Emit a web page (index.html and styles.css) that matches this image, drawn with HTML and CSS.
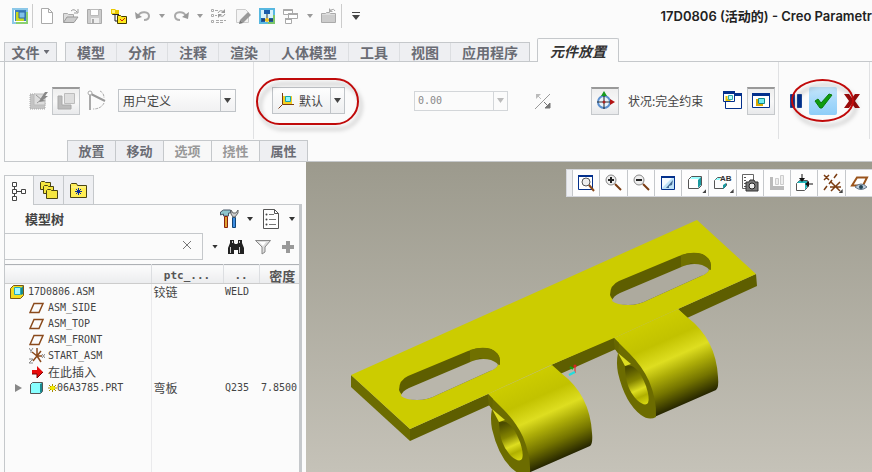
FILE: index.html
```html
<!DOCTYPE html>
<html lang="zh-CN">
<head>
<meta charset="utf-8">
<title>17D0806</title>
<link rel="stylesheet" href="styles.css">
</head>
<body>
<header class="titlebar">
  <div class="quick">
    <button class="ic" aria-label="窗口"><svg width="16" height="16"><path d="M1 1h14v14H1z" fill="#fff" stroke="#8cc8e8" stroke-width="2"/><path d="M15 4v11H4" fill="none" stroke="#8bd070" stroke-width="2"/><path d="M3 2h11v11H3z" fill="#3c7ebc"/><path d="M4 4v9h8v-3H7V4z" fill="#c8d820"/><path d="M7 4h6v6H7z" fill="#7fc0e8" stroke="#2c68a4"/></svg></button>
    <span class="sep"></span>
    <button class="ic" aria-label="新建"><svg width="16" height="16"><path d="M2.500 .5h7l4 4v11h-11zM9.500 .5v4h4" fill="#fff" stroke="#aaa"/></svg></button>
    <button class="ic" aria-label="打开"><svg width="16" height="16"><path d="M.5 14V5.500h4l1 1h5V9" fill="#ddd" stroke="#aaa"/><path d="M.5 14.500L4 9h11l-4 5.500z" fill="#ccc" stroke="#999"/><path d="M8 3q3-3 6 1M15 1v4h-4" fill="none" stroke="#999"/></svg></button>
    <button class="ic" aria-label="保存"><svg width="16" height="16"><path d="M.5 1.500h14v14H.5z" fill="#ccc" stroke="#aaa"/><path d="M3.500 1.500h8v6h-8z" fill="#fff" stroke="#bbb"/><path d="M4 10h8v5H4z" fill="#eee"/><path d="M5 11h2v4H5z" fill="#aaa"/></svg></button>
    <button class="ic" aria-label="重新生成"><svg width="16" height="16"><path d="M1.500 1v5.500H8M4 7v6h4" fill="none" stroke="#222"/><path d="M0 1h4l1 1h3v4H0z" fill="#e9c800"/><path d="M1 2h3v3H1z" fill="#fff37a"/><path d="M6.500 9V7.500h3l1 1h5v7h-9z" fill="#ffe91c" stroke="#443c00"/><path d="M9 11l2 2 3-3" fill="none" stroke="#c21"/></svg></button>
    <button class="ic" aria-label="撤消"><svg width="16" height="16"><path d="M3 8c3-6 11-4 11 0 0 3-2 4-5 4" fill="none" stroke="#aaa" stroke-width="2"/><path d="M0 4l1 7 6-2z" fill="#999"/></svg></button>
    <button class="drop" aria-label="撤消列表"></button>
    <button class="ic" aria-label="重做"><svg width="16" height="16"><path d="M13 8C10 2 2 4 2 8c0 3 2 4 5 4" fill="none" stroke="#aaa" stroke-width="2"/><path d="M16 4l-1 7-6-2z" fill="#999"/></svg></button>
    <button class="drop" aria-label="重做列表"></button>
    <button class="ic" aria-label="再生"><svg width="16" height="16"><path d="M.5 1.500h2v2h-2zM.5 6.500h2v2h-2zM.5 12.500h2v2h-2z" fill="#fff" stroke="#aaa"/><path d="M4 2.500h3M4 7.500h2M5 12.500h3m1 0h3m1 0h2M5 14.500h3m1 0h3" stroke="#aaa"/><path d="M7 5q2-4 6-1M14 6q-2 4-6 1" fill="none" stroke="#999"/><path d="M14 1v4h-4zM7 10V6h4z" fill="#999"/></svg></button>
    <button class="ic" aria-label="编辑"><svg width="16" height="16"><path d="M1.500 1.500h9l3 3v10h-12z" fill="#f4f4f4" stroke="#ccc"/><path d="M5 12l8-8 3 3-8 8z" fill="#999"/><path d="M4 16l1-4 3 3z" fill="#777"/></svg></button>
    <button class="ic" aria-label="模型表示"><svg width="16" height="16"><path d="M1 1h14v14H1z" fill="#d8f2fa" stroke="#58b8e0" stroke-width="2"/><path d="M5 2h6v4H5zM2 10h4v4H2zM10 10h4v4h-4z" fill="#1c5eaa"/><path d="M8 6v5M3 12h11" stroke="#333"/><circle cx="8" cy="12" r="2" fill="#f7c21a"/><path d="M15 7v8H9" fill="none" stroke="#7cc66a" stroke-width="2"/></svg></button>
    <button class="ic" aria-label="窗口列表"><svg width="16" height="16"><path d="M.5 1.500h9v5h-9zM5.500 5.500h9v5h-9zM2.500 10.500h6v5h-6z" fill="#fff" stroke="#aaa"/><path d="M.5 2h9M5 6h10M2 11h7" stroke="#aaa" stroke-width="2"/></svg></button>
    <button class="drop" aria-label="窗口选择"></button>
    <button class="ic" aria-label="关闭"><svg width="16" height="16"><path d="M.5 14.500v-9h4l1-1h3l1 1h5v9z" fill="#ddd" stroke="#aaa"/><path d="M1 7h13v7H1z" fill="#ccc"/><path d="M10 2q3-2 4 1" fill="none" stroke="#aaa"/><path d="M8 0v4h4z" fill="#aaa"/></svg></button>
    <span class="sep"></span>
    <button class="ic" aria-label="自定义"><svg width="16" height="16"><path d="M4 4h8v1H4zM4 7h8l-4 5z" fill="#444"/></svg></button>
  </div>
  <h1 class="title">17D0806 (活动的) - Creo Parametr</h1>
</header>

<nav class="tabs">
  <button class="file">文件<i class="tri"></i></button>
  <div class="tabset">
    <button>模型</button><button>分析</button><button>注释</button><button>渲染</button><button>人体模型</button><button>工具</button><button>视图</button><button>应用程序</button>
  </div>
  <button class="active">元件放置</button>
</nav>

<section class="ribbon">
  <div class="controls">
    <div class="group constraints">
      <button class="ic tool" aria-label="界面"><svg width="22" height="22"><path d="M1 4h6v9h9v6H1z" fill="#c4c4c4" stroke="#aaa" stroke-dasharray="1 1"/><path d="M5 4h11v11H5z" fill="#ddd" stroke="#bbb"/><path d="M7 5l6 5M8 13l5-4" stroke="#999"/><path d="M10 12l2-4 4-6h3l-3 4h3l-5 4 3 1z" fill="#888"/></svg></button>
      <button class="pressed" aria-label="手动"><svg width="20" height="20"><path d="M2 5h4v9h9v4H2z" fill="#bbb" stroke="#aaa"/><path d="M8.500 2.500h10v10h-10z" fill="#dedede" stroke="#bcbcbc"/></svg></button>
      <button class="ic tool" aria-label="约束"><svg width="22" height="22"><path d="M5 4v16" stroke="#aaa" stroke-width="2"/><path d="M6 4l14 7" stroke="#999" stroke-width="2"/><circle cx="5" cy="3" r="2" fill="#fff" stroke="#aaa"/><path d="M15 1q4 2 4 7M19 13q-3 6-11 6" fill="none" stroke="#aaa" stroke-dasharray="3 1"/></svg></button>
      <span class="combo"><select aria-label="约束集"><option>用户定义</option></select></span>
    </div>
    <div class="group placement">
      <span class="circled">
        <button class="split"><svg width="18" height="18"><path d="M5.500 1v11.500H17M5.500 12.500l-4 4" fill="none" stroke="#7a3c12"/><path d="M6 4h9v8H6z" fill="#f5d020"/><path d="M8.500 4.500h5v5h-5z" fill="#8ff6fa" stroke="#16a4ac"/></svg>默认<span class="end"><i class="tri"></i></span></button>
        <span class="ring"></span>
      </span>
      <span class="offset"><input aria-label="偏移" value="0.00" disabled><button disabled aria-label="偏移列表"><i class="tri"></i></button></span>
      <button class="ic flip" aria-label="反向" disabled><svg width="18" height="18"><path d="M1 17L16 2" stroke="#999"/><path d="M3 3l4 4" stroke="#bbb"/><path d="M2 2h5L2 7z" fill="#bbb"/><path d="M16 16h-5l5-5zM10 10l4 4" fill="#777" stroke="#777"/></svg></button>
      <div class="status">
        <button class="pressed" aria-label="3D 拖动器"><svg width="22" height="22"><circle cx="10" cy="12" r="6" fill="#e9f3fc" stroke="#5b8fce" stroke-width="2"/><path d="M10 5v14" stroke="#222"/><path d="M3 12h13" stroke="#333"/><path d="M7 6l3-5 3 5z" fill="#179a20"/><path d="M16 9l5 3-5 3z" fill="#b31212"/><circle cx="10" cy="12" r="1.500" fill="#a22"/></svg></button>
        <output>状况:完全约束</output>
        <button class="ic win" aria-label="单独窗口"><svg width="22" height="20"><path d="M3.500 5v12.500h16V3" fill="#fff" stroke="#03308c"/><path d="M9 2h11v3H9z" fill="#03308c"/><path d="M1.500 1.500h11v9h-11z" fill="#fff" stroke="#03308c"/><path d="M1 0h12v3H1z" fill="#03308c"/><path d="M4.500 5v4h4" fill="none" stroke="#e2c000" stroke-width="2"/><path d="M6.500 4.500h4v4h-4z" fill="#bff" stroke="#3aa"/></svg></button>
        <button class="pressed" aria-label="主窗口"><svg width="20" height="20"><path d="M1.500 3.500h17v13h-17z" fill="#fff" stroke="#03308c"/><path d="M1 2h18v3H1z" fill="#03308c"/><path d="M6 8v6h6" fill="none" stroke="#d8a800" stroke-width="2"/><path d="M7.500 7.500h6v5h-6z" fill="#72eef0" stroke="#188"/></svg></button>
      </div>
    </div>
    <div class="group confirm">
      <button class="ic" aria-label="暂停"><svg width="12" height="16"><path d="M.5 1.500h4v13h-4zM7.500 1.500h4v13h-4z" fill="#03308c" stroke="#1c4798"/></svg></button>
      <span class="circled round">
        <button class="ok" aria-label="确定"><svg width="20" height="20"><path d="M2 10l3-2 3 4 8-9 3 1L9 17H7z" fill="#0f9c0f" stroke="#0b7a0b"/></svg></button>
        <span class="ring"></span>
      </span>
      <button class="ic" aria-label="取消"><svg width="16" height="16"><path d="M0 1h5l3 4 3-4h5l-5 7 5 7h-5l-3-4-3 4H0l5-7z" fill="#9a0c0c"/></svg></button>
    </div>
  </div>
  <div class="subtabs">
    <button>放置</button><button>移动</button><button disabled>选项</button><button disabled>挠性</button><button>属性</button>
  </div>
</section>

<main class="work">
  <aside class="side">
    <div class="sidetabs">
      <button class="on" aria-label="模型树"><svg width="16" height="20"><path d="M3.500 5v3M3.500 12v3M6 10.500h4" stroke="#444"/><path d="M1.500 1.500h4v4h-4zM1.500 8.500h4v4h-4zM1.500 15.500h4v4h-4zM10.500 8.500h4v4h-4z" fill="#fff" stroke="#444"/></svg></button>
      <button aria-label="文件夹浏览器"><svg width="20" height="20"><g fill="#f5e640" stroke="#4a4414"><path d="M1.500 9.500v-7l1-1h3l1 1h5v7z"/><path d="M4.500 13.500v-7l1-1h3l1 1h5v7z"/><path d="M7.500 18.500v-8l1-1h3l1 1h6v8z"/></g></svg></button>
      <button aria-label="收藏夹"><svg width="18" height="18"><path d="M.5 16.500v-13l1-1h5l1 2h9v12z" fill="#ffee54" stroke="#4a4414"/><path d="M1 6h15" stroke="#fff6a0"/><path d="M8.500 7v7M5 10.500h7M6 8l5 5M11 8l-5 5" stroke="#0a2c9c"/></svg></button>
    </div>
    <div class="panel">
      <div class="bar">
        <h2>模型树</h2>
        <button class="ic" aria-label="设置"><svg width="20" height="20"><path d="M1.500 6V3l3-2h7v3h-2v3h-5V5z" fill="#8cc4cc" stroke="#456"/><path d="M5.500 7.500h3v11h-3z" fill="#e0a030" stroke="#8a2010"/><path d="M13.500 8.500h3v10h-3z" fill="#3d8ce0" stroke="#147"/><path d="M12 1v4l2 3h2l3-4V1l-2 3h-3z" fill="#ccc" stroke="#666"/></svg></button>
        <button class="drop dark" aria-label="设置菜单"></button>
        <button class="ic" aria-label="显示"><svg width="20" height="20"><path d="M2.500 .5h11l4 4v15h-15z" fill="#fff" stroke="#555"/><path d="M13.500 .5v4h4" fill="none" stroke="#555"/><path d="M8 5.500h5M8 10.500h7M8 15.500h7" stroke="#777"/><circle cx="5.500" cy="5.500" r="1" fill="#444"/><circle cx="5.500" cy="10.500" r="1" fill="#444"/><circle cx="5.500" cy="15.500" r="1" fill="#444"/></svg></button>
        <button class="drop dark" aria-label="显示菜单"></button>
      </div>
      <div class="bar search">
        <div class="field"><input aria-label="搜索"><button aria-label="清除"><svg width="8" height="8"><path d="M0 0l8 8M8 0L0 8" stroke="#777"/></svg></button></div>
        <button class="drop dark" aria-label="搜索选项"></button>
        <button class="ic" aria-label="查找"><svg width="18" height="16"><path d="M3 1h4v3l1 1h2l1-1V1h4v3l2 5v6h-6v-4H7v4H1V9l2-5z" fill="#222"/><path d="M3.500 8v6M12.500 8v6M5.500 2v2M12.500 2v2" stroke="#ccc"/></svg></button>
        <button class="ic" aria-label="过滤器"><svg width="18" height="16"><path d="M1.500 1.500h15L11 8v5l-3 2V8z" fill="#ddd" stroke="#888"/><path d="M5 3h7L9 7z" fill="#fff"/></svg></button>
        <button class="ic" aria-label="添加"><svg width="14" height="14"><path d="M5 1h4v4h4v4H9v4H5V9H1V5h4z" fill="#999"/></svg></button>
      </div>
      <table class="tree">
        <colgroup><col class="c1"><col class="c2"><col class="c3"><col></colgroup>
        <thead><tr><th aria-label="名称"></th><th class="m">ptc_...</th><th class="m">..</th><th class="cn">密度</th></tr></thead>
        <tbody>
          <tr><td><span class="node"><svg width="16" height="14"><path d="M1.500 3.500l3-3h10v10l-3 3h-10z" fill="#f6dc1c" stroke="#7b5a10"/><path d="M5.500 2.500h6v7h-6z" fill="#a5fbff" stroke="#2ab"/><path d="M12 3l2-2v8l-2 1z" fill="#188a90"/></svg>17D0806.ASM</span></td><td class="cn">铰链</td><td>WELD</td><td></td></tr>
          <tr><td><span class="node lv"><svg width="16" height="14"><path d="M5 2.500h9L10 11.500H1z" fill="none" stroke="#8a4a1c" stroke-width="1.500"/></svg>ASM_SIDE</span></td><td></td><td></td><td></td></tr>
          <tr><td><span class="node lv"><svg width="16" height="14"><path d="M5 2.500h9L10 11.500H1z" fill="none" stroke="#8a4a1c" stroke-width="1.500"/></svg>ASM_TOP</span></td><td></td><td></td><td></td></tr>
          <tr><td><span class="node lv"><svg width="16" height="14"><path d="M5 2.500h9L10 11.500H1z" fill="none" stroke="#8a4a1c" stroke-width="1.500"/></svg>ASM_FRONT</span></td><td></td><td></td><td></td></tr>
          <tr><td><span class="node lv"><svg width="16" height="16"><path d="M8 0v8L3 4M8 8h5M8 8l4-5M8 8l-4 5M8 8l4 6" fill="none" stroke="#8a4a1c" stroke-width="1.500"/><path d="M0 0l2 3 2-3M2 3v2M0 11h4l-4 4h4M13 6l3 4M16 6l-3 4" fill="none" stroke="#888"/></svg>START_ASM</span></td><td></td><td></td><td></td></tr>
          <tr><td><span class="node lv cn"><svg width="16" height="14"><path d="M3 5h5V1l6 6-6 6V9H3z" fill="#e80c0c"/><path d="M3 9h5v4l6-6" fill="none" stroke="#700"/></svg>在此插入</span></td><td></td><td></td><td></td></tr>
          <tr><td><span class="node part"><button class="expand" aria-label="展开"></button><svg width="16" height="14"><path d="M1.500 3.500l2-2h10v9l-2 2h-10z" fill="#8ff" stroke="#555"/><path d="M11 3l2-1v9l-2 1z" fill="#188a90"/></svg><span><svg width="9" height="8"><path d="M2 2h5v4H2z" fill="#f2ea00"/><path d="M0 4h2M7 4h2M4.500 0v2M4.500 6v2M1 1l2 2M8 1L6 3M1 7l2-2M8 7L6 5" stroke="#a98f00"/></svg>06A3785.PRT</span></span></td><td class="cn">弯板</td><td>Q235</td><td>7.8500</td></tr>
          <tr class="rest"><td></td><td></td><td></td><td></td></tr>
        </tbody>
      </table>
    </div>
  </aside>

  <section class="canvas">
    <svg class="scene" viewBox="306 162 566 310" preserveAspectRatio="xMidYMid slice" role="img" aria-label="铰链">
      <defs>
        <linearGradient id="sky" gradientUnits="userSpaceOnUse" x1="0" y1="162" x2="0" y2="472"><stop offset="0" stop-color="#9c9a8d"/><stop offset="1" stop-color="#c5c2b8"/></linearGradient>
        <linearGradient id="barrel" gradientUnits="userSpaceOnUse" x1="614" y1="338" x2="650" y2="419"><stop offset="0" stop-color="#cccc00"/><stop offset=".26" stop-color="#c2c200"/><stop offset=".47" stop-color="#dede20"/><stop offset=".62" stop-color="#adad08"/><stop offset=".8" stop-color="#747400"/><stop offset="1" stop-color="#262600"/></linearGradient>
        <linearGradient id="bore" gradientUnits="userSpaceOnUse" x1="628" y1="368" x2="644" y2="405"><stop offset="0" stop-color="#4c4c00"/><stop offset=".35" stop-color="#858500"/><stop offset=".6" stop-color="#dede20"/><stop offset=".78" stop-color="#b0b000"/><stop offset="1" stop-color="#d8d810"/></linearGradient>
        <path id="slot" d="M399 390Q399 380 408 376L468 351Q480 346 491 349Q500 353 500 361Q498 368 490 371L437 395Q428 400 417 400Q402 399 399 390Z"/>
        <g id="knuckle">
          <path d="M614 338L678 309L687 317Q716 339 718 377Q719 388 716 390L652 418L636 366Z" fill="url(#barrel)"/>
          <path d="M614 338L615 349L618 353Q616 362 618 373Q625 403 641 415Q649 421 656 417Q657 400 649 381Q642 366 629 353Z" fill="#6c6c00"/>
          <path d="M625 366Q637 362 646 386Q650 398 648 403Q645 407 637 400Q625 388 625 366Z" fill="url(#bore)"/>
          <path d="M618 353L631 364L625 366Z" fill="#dede20"/>
          <path d="M614 338L615 349L618 353L619 343Z" fill="#666600"/>
        </g>
      </defs>
      <path d="M306 162h566v310H306z" fill="url(#sky)"/>
      <path d="M351 375L410 429V441L351 387Z" fill="#6c6c00"/>
      <path d="M410 429L488 394L490 405L410 441ZM551 365L614 337L616 349L560 374ZM678 309L756 274L757 286L687 318Z" fill="#5e5e00"/>
      <path d="M351 375L697 220L756 274L678 309L614 338L551 365L488 394L410 429Z" fill="#cccc00"/>
      <use href="#knuckle" transform="translate(-126 56)"/>
      <use href="#knuckle"/>
      <use href="#slot" fill="#5e5e00"/>
      <path d="M470 350Q482 346 491 349Q500 353 500 361V365L480 358L470 363Z" fill="#707000"/>
      <path d="M401 396Q402 391 409 388L468 363Q480 357 491 360Q498 363 498 365Q496 369 490 371L437 395Q428 400 417 400Q406 400 401 396Z" fill="#b9b6ab"/>
      <g transform="translate(211 -95)">
        <use href="#slot" fill="#5e5e00"/>
        <path d="M470 350Q482 346 491 349Q500 353 500 361V365L480 358L470 363Z" fill="#707000"/>
        <path d="M401 396Q402 391 409 388L468 363Q480 357 491 360Q498 363 498 365Q496 369 490 371L437 395Q428 400 417 400Q406 400 401 396Z" fill="#adaa9e"/>
      </g>
      <path d="M575 366v7" stroke="#d22"/><circle cx="575" cy="366" r="1.500" fill="#d22"/><path d="M575 372l-6 3" stroke="#2dd" stroke-width="2"/><path d="M570 367l3 2" stroke="#1a1" stroke-width="2"/>
    </svg>
    <div class="viewbar">
      <button aria-label="重新调整"><svg width="20" height="20"><path d="M2.500 2.500h14v14h-14z" fill="#fff" stroke="#03308c"/><path d="M2 3h15" stroke="#03308c" stroke-width="2"/><circle cx="10" cy="9" r="4" fill="#eee" stroke="#555"/><path d="M13 12l5 6" stroke="#8a4a1c" stroke-width="2"/></svg></button>
      <button aria-label="放大"><svg width="20" height="20"><circle cx="8" cy="7" r="5" fill="#eee" stroke="#888"/><path d="M5 7h6M8 4v6" stroke="#222" stroke-width="2"/><path d="M12 11l6 6" stroke="#7a3c12" stroke-width="2"/></svg></button>
      <button aria-label="缩小"><svg width="20" height="20"><circle cx="8" cy="7" r="5" fill="#eee" stroke="#888"/><path d="M5 7h6" stroke="#222" stroke-width="2"/><path d="M12 11l6 6" stroke="#7a3c12" stroke-width="2"/></svg></button>
      <button aria-label="重画"><svg width="20" height="20"><path d="M3.500 3.500h13v13h-13z" fill="#bfe3f8" stroke="#03308c"/><path d="M3 4h14" stroke="#03308c" stroke-width="2"/><path d="M4 5h10L4 15z" fill="#f4fbff"/><path d="M8 15l7-8-1 5-3 1v2z" fill="#446a94"/></svg></button>
      <button class="more" aria-label="显示样式"><svg width="20" height="20"><path d="M3.500 6.500l3-3h10v9l-3 3h-10z" fill="#fff" stroke="#555"/><path d="M5 6l2-2h9l-2 2z" fill="#9ff"/><path d="M13 7l3-3v8l-3 3z" fill="#1b9aa0"/></svg></button>
      <button class="more" aria-label="已命名视图"><svg width="20" height="20"><path d="M2.500 15.500v-8l3-3h4M2.500 15.500h9l3-3v-2" fill="none" stroke="#555"/><path d="M11 12l3-2v3l-3 3z" fill="#1b9aa0"/><path d="M3 7l3-2h3L7 7z" fill="#8ff"/><text x="8" y="8">AB</text></svg></button>
      <button aria-label="视图管理器"><svg width="20" height="20"><path d="M2.500 1.500h11v14h-11z" fill="#fff" stroke="#666"/><path d="M4 4.500h2M4 7.500h2M4 10.500h2M4 13.500h2" stroke="#555"/><path d="M6 9h3l1-2h4l1 2h3v9H6z" fill="#777" stroke="#333"/><circle cx="12" cy="13" r="3" fill="#eee" stroke="#222"/></svg></button>
      <button disabled aria-label="剖面"><svg width="20" height="20"><path d="M3 4h3v9h11v4H3z" fill="#bbb"/><path d="M8.500 5.500h3v6h-3zM13.500 2.500h3v9h-3z" fill="#eee" stroke="#ccc"/></svg></button>
      <button aria-label="分解"><svg width="20" height="20"><path d="M2.500 10.500l3-3h8v7l-3 3h-8z" fill="#fff" stroke="#555"/><path d="M3 10l2-2h8l-2 2zM11 10l2-2v6l-2 3z" fill="#23b8bd"/><path d="M8 1v6M19 11h-6" stroke="#111"/><path d="M5 5h6L8 9zM15 8v6l-4-3z" fill="#111"/></svg></button>
      <button class="more" aria-label="基准显示"><svg width="20" height="20"><path d="M2 2l5 5M7 2L2 7M15 1l-3 4M10 7l-3 4M5 13l-3 4M9 9l9 9M18 9l-9 9M8 14h11" stroke="#7a3c12" stroke-width="1.500" fill="none"/></svg></button>
      <button aria-label="注释显示"><svg width="20" height="20"><path d="M8 4.500h10L14 12.500H3z" fill="#fff" stroke="#9a541c" stroke-width="2"/><path d="M6 14q6-6 12 0-6 5-12 0z" fill="#bcd" stroke="#678"/><circle cx="12" cy="14" r="2" fill="#245"/></svg></button>
    </div>
  </section>
</main>
</body>
</html>
```
FILE: styles.css
```css
* { box-sizing: border-box; }
body {
  margin: 0;
  height: 100vh;
  display: flex;
  flex-direction: column;
  overflow: hidden;
  background: #fbfbfb;
  color: #444;
  font: 12px/16px "Noto Sans CJK SC", sans-serif;
}
button, input, select { font: inherit; color: inherit; margin: 0; padding: 0; border: 0; background: none; border-radius: 0; }
svg { display: block; flex: none; }
h1, h2 { margin: 0; }

.ic, .pressed, .ok { display: flex; align-items: center; justify-content: center; flex: none; }
.drop {
  flex: none;
  width: 6px;
  height: 4px;
  background: #999;
  clip-path: polygon(0 0, 100% 0, 50% 100%);
}
.drop.dark { background: #333; }
.tri {
  display: inline-block;
  width: 8px;
  height: 5px;
  background: currentColor;
  clip-path: polygon(0 0, 100% 0, 50% 100%);
}

.titlebar { display: flex; align-items: center; justify-content: space-between; height: 32px; flex: none; }
.quick { display: flex; align-items: center; gap: 8px; padding-left: 12px; }
.sep { width: 1px; height: 24px; margin: 0 -2px 0 -4px; background: #ccc; }
.title { font: 600 13px/16px Inter, "Noto Sans CJK SC", sans-serif; color: #222; white-space: nowrap; }

.tabs { display: flex; align-items: flex-end; height: 30px; flex: none; padding-left: 4px; border-bottom: 1px solid #c5c8cb; font-size: 14px; line-height: 18px; font-weight: 700; color: #6a6c74; }
.tabs button { height: 18px; padding: 0 11px; white-space: nowrap; }
.tabs .file { width: 53px; height: 19px; padding: 0; border: 1px solid #c5c8cb; border-bottom: 0; background: #eeeff2; display: flex; align-items: center; justify-content: center; gap: 4px; }
.file .tri { width: 6px; height: 4px; }
.tabset { display: flex; height: 19px; margin: 0 7px 0 8px; border: 1px solid #c5c8cb; border-bottom: 0; background: #eeeff2; }
.tabset button { border-right: 1px solid #dcdee1; }
.tabset button:last-child { border-right: 0; }
.tabs .active { height: 24px; margin-bottom: -1px; padding: 0 12px; border: 1px solid #c5c8cb; border-bottom: 0; border-radius: 2px 2px 0 0; background: #fbfbfb; color: #333; font-style: italic; }

.ribbon { flex: none; margin-left: 4px; border-left: 1px solid #c5c8cb; border-bottom: 1px solid #c5c8cb; }
.controls { display: flex; height: 78px; padding: 0 2px 1px 0; }
.group { display: flex; align-items: center; border-right: 1px solid #e0e1e3; }
.constraints { width: 249px; padding-left: 22px; }
.tool { width: 25px; }
.constraints .pressed + .tool { width: 24px; margin-left: 4px; }
.constraints .combo { margin-left: 10px; }
.pressed { width: 28px; height: 28px; border: 1px solid #c5c8cb; border-top: 2px solid #999; background: linear-gradient(#eee, #f8f8f8 50%, #e8e9eb); }
.combo { position: relative; width: 118px; height: 23px; border: 1px solid #c0c4c8; background: linear-gradient(#fdfdfd, #f1f1f2); }
.combo select { width: 100%; height: 21px; padding: 0 18px 0 4px; appearance: none; }
.combo::after { content: ""; position: absolute; right: 4px; top: 8px; width: 7px; height: 5px; background: #444; clip-path: polygon(0 0, 100% 0, 50% 100%); }
.combo::before { content: ""; position: absolute; right: 14px; top: 0; bottom: 0; width: 1px; background: #c0c4c8; }
.constraints .pressed + .tool + .combo { margin-left: 10px; }

.placement { flex: 1; padding: 0 3px 0 18px; }
.circled { position: relative; }
.split { display: flex; align-items: center; gap: 4px; width: 73px; height: 27px; padding-left: 4px; border: 1px solid #c0c4c8; background: linear-gradient(#fefefe, #eeeff0); }
.end { display: flex; align-items: center; justify-content: center; width: 14px; height: 25px; margin-left: auto; border-left: 1px solid #c0c4c8; }
.end .tri, .offset .tri { width: 7px; }
.ring { position: absolute; inset: -9px -14px -11px -16px; border: 2px solid #c00a0a; border-radius: 24px; filter: drop-shadow(3px 5px 2px #0004); pointer-events: none; }
.round .ring { inset: -8px -17px -7px -18px; border-radius: 50%; }
.offset { display: flex; width: 94px; height: 20px; margin-left: 69px; border: 1px solid #d3d6d9; color: #888; }
.offset input { flex: 1; min-width: 0; padding-left: 3px; font: 10px/16px "DejaVu Sans Mono", monospace; }
.offset button { display: flex; align-items: center; justify-content: center; width: 14px; border-left: 1px solid #d3d6d9; color: #bbb; }
.flip { margin-left: 26px; }
.status { display: flex; align-items: center; margin-left: auto; white-space: nowrap; }
.status output { min-width: 78px; margin: 0 16px 0 9px; }
.win { margin-right: 3px; }
.confirm { width: 91px; justify-content: space-between; padding: 0 9px 0 11px; }
.ok { width: 28px; height: 28px; border-radius: 2px; background: linear-gradient(#c4e5fb, #a3d7fa 55%, #8fcef8); }

.subtabs { display: flex; margin-left: 62px; height: 21px; }
.subtabs button { width: 49px; margin-right: -1px; border: 1px solid #c5c8cb; border-width: 1px 1px 0; background: #eeeff2; font-size: 13px; line-height: 18px; font-weight: 700; color: #6a6c74; }
.subtabs button:disabled { background: #f8f8f8; color: #999; }

.work { flex: 1; min-height: 0; display: grid; grid-template-columns: 306px 1fr; }
.side { display: flex; flex-direction: column; padding: 13px 4px 0 4px; min-height: 0; }
.sidetabs { display: flex; height: 29px; flex: none; }
.sidetabs button { display: flex; align-items: center; justify-content: center; width: 30px; height: 29px; border: 1px solid #c5c8cb; border-left-width: 0; border-bottom: 0; background: #eeeff2; }
.sidetabs .on { height: 30px; border-left-width: 1px; background: #fbfbfb; position: relative; }
.panel { flex: 1; min-height: 0; display: flex; flex-direction: column; border: 1px solid #c5c8cb; border-width: 1px 3px 0 1px; }
.bar { display: flex; align-items: center; gap: 8px; flex: none; height: 28px; padding-right: 4px; }
.bar h2 { flex: 1; padding-left: 20px; font-size: 13px; line-height: 18px; }
.search { height: 27px; gap: 9px; }
.field { display: flex; align-items: center; flex: 1; height: 27px; padding-right: 11px; border: 1px solid #c5c8cb; border-left: 0; }
.field input { flex: 1; min-width: 0; height: 20px; }
.field button { padding-bottom: 4px; }

.tree { flex: 1; width: 100%; margin-top: 4px; border-collapse: collapse; table-layout: fixed; font: 10px/16px "DejaVu Sans Mono", monospace; }
.c1 { width: 146px; }
.c2 { width: 72px; }
.c3 { width: 36px; }
.tree tr { height: 16px; }
.tree th { height: 19px; padding: 2px 0 0; border-top: 1px solid #aeb1b5; border-bottom: 1px solid #ccc; background: linear-gradient(#fcfcfc, #ebecee); border-right: 1px solid #dcdee1; line-height: 15px; color: #555; white-space: nowrap; }
.tree th.m { font-size: 11px; }
.tree th.cn { border-right: 0; }
.tree td { height: 16px; padding: 0 0 0 2px; white-space: nowrap; vertical-align: top; }
.tree td:first-child { padding-left: 4px; border-right: 1px solid #eaeaec; }
.tree .cn { font: 12px/16px "Noto Sans CJK SC", sans-serif; }
.tree thead .cn { padding-left: 6px; font-weight: 700; font-size: 13px; line-height: 15px; }
.tree tr.rest, .tree .rest td { height: auto; }
.node { display: flex; align-items: center; gap: 3px; height: 16px; }
.node.lv { padding-left: 20px; }
.part { padding-left: 6px; }
.part .expand { width: 7px; height: 8px; margin-right: 4px; background: #888; clip-path: polygon(0 0, 100% 50%, 0 100%); }
.part span { display: flex; align-items: center; }

.canvas { position: relative; min-width: 0; overflow: hidden; }
.scene { position: absolute; inset: 0; width: 100%; height: 100%; }
.viewbar { position: relative; display: flex; height: 28px; margin: 7px 0 0 260px; padding-left: 5px; border: 1px solid #d4d6dc; border-right: 0; background: #eeeff2; }
.viewbar button { position: relative; flex: 1; display: flex; align-items: center; justify-content: center; border-left: 1px solid #c5c8cb; background: #fdfdfd; }
.viewbar text { font: 700 8px "Liberation Sans", sans-serif; fill: #333; }
.more::after { content: ""; position: absolute; right: 2px; bottom: 3px; width: 4px; height: 4px; background: #444; clip-path: polygon(100% 0, 100% 100%, 0 100%); }
```
